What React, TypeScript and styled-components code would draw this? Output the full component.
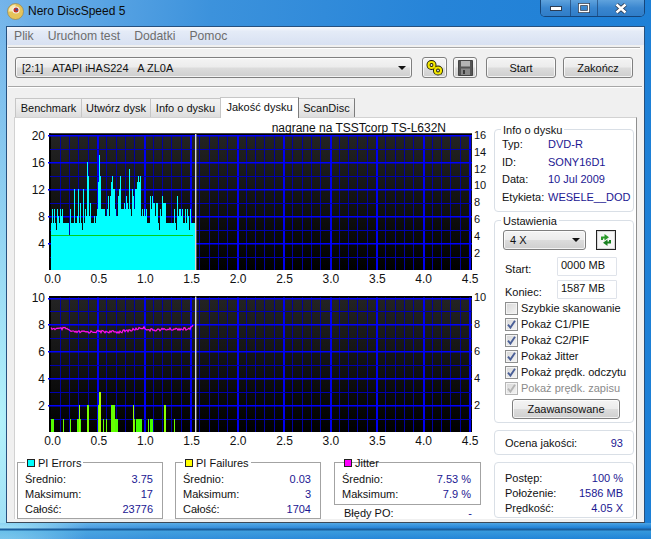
import React from "react";
import styled, { createGlobalStyle } from "styled-components";

const Global = createGlobalStyle`
  html, body { margin: 0; padding: 0; background: #fff; }
  * { box-sizing: border-box; }
  #root { width: 651px; height: 539px; overflow: hidden; }
`;

const FONT = `"Liberation Sans", Arial, sans-serif`;

const Desktop = styled.div`
  width: 651px;
  height: 539px;
  display: flex;
  flex-direction: column;
  padding: 0 6px;
  font: 11px ${FONT};
  color: #111;
  background:
    radial-gradient(ellipse 90px 420px at 0% 78%, #b4f2fb 0%, rgba(180, 242, 251, 0) 100%),
    linear-gradient(96deg, #74b4ea 0%, #3c92dc 30%, #2684d8 62%, #1c7fd6 100%);
`;

const TitleBar = styled.div`
  height: 26px;
  display: flex;
  align-items: flex-start;
  justify-content: space-between;
`;

const TitleLeft = styled.div`
  display: flex;
  align-items: center;
  gap: 4px;
  height: 22px;
  margin-left: 1px;
  font-size: 12px;
  color: #0b0b0b;
`;

const Controls = styled.div`
  display: flex;
  height: 17px;
  border: 1px solid rgba(18, 50, 92, 0.75);
  border-top: none;
  border-radius: 0 0 5px 5px;
  overflow: hidden;
  box-shadow: inset 0 0 0 1px rgba(255, 255, 255, 0.25);
`;

const ControlButton = styled.div<{ $w: number }>`
  width: ${(p) => p.$w}px;
  display: flex;
  align-items: center;
  justify-content: center;
  border-left: 1px solid rgba(18, 50, 92, 0.55);
  background: linear-gradient(#5fa2dd, #3a86cf 50%, #2f7dc8);
  &:first-child { border-left: none; }
`;

const Client = styled.div`
  flex: none;
  height: 497px;
  display: flex;
  flex-direction: column;
  background: #f0f0f0;
  border: 1px solid #26507e;
  border-bottom-color: #3d4a58;
`;

const WindowFoot = styled.div`
  flex: 1;
  margin: 0 -6px;
  background: linear-gradient(
    rgba(120, 200, 240, 0.5) 0,
    rgba(120, 200, 240, 0) 5px,
    #1b5f9e 6px,
    #1b5f9e 7px,
    rgba(70, 170, 225, 0.6) 8px,
    rgba(40, 140, 215, 0.3) 100%
  );
`;

const MenuBar = styled.div`
  height: 18px;
  display: flex;
  align-items: center;
  gap: 14px;
  padding-left: 7px;
  font-size: 12.2px;
  color: #6d6d6d;
  background: linear-gradient(#f6f8fc 0, #e4ebf7 25%, #d8e1f2 100%);
`;

const Rule = styled.div<{ $top: number; $right: number }>`
  height: 2px;
  flex: none;
  margin: ${(p) => p.$top}px ${(p) => p.$right}px 0 1px;
  border-top: 1px solid #a7a7a7;
  border-bottom: 1px solid #fff;
`;

const Toolbar = styled.div`
  height: 37px;
  display: flex;
  align-items: center;
  padding-left: 8px;
`;

const aero = `
  border: 1px solid #7f7f7f;
  border-radius: 3px;
  background: linear-gradient(#f4f4f4 0, #ececec 48%, #dcdcdc 52%, #cfcfcf 100%);
  box-shadow: inset 0 0 0 1px rgba(255,255,255,.75);
`;

const Combo = styled.div<{ $w: number; $h: number }>`
  ${aero}
  width: ${(p) => p.$w}px;
  height: ${(p) => p.$h}px;
  display: flex;
  align-items: center;
  justify-content: space-between;
  padding: 0 5px 0 6px;
  white-space: pre;
`;

const Arrow = styled.span`
  width: 0;
  height: 0;
  border-left: 4px solid transparent;
  border-right: 4px solid transparent;
  border-top: 4px solid #111;
`;

const IconButton = styled.div<{ $w: number; $ml: number }>`
  ${aero}
  width: ${(p) => p.$w}px;
  height: 21px;
  margin-left: ${(p) => p.$ml}px;
  display: flex;
  align-items: center;
  justify-content: center;
`;

const PushButton = styled.div<{ $w: number; $ml: number; $h?: number }>`
  ${aero}
  width: ${(p) => p.$w}px;
  height: ${(p) => p.$h ?? 21}px;
  margin-left: ${(p) => p.$ml}px;
  display: flex;
  align-items: center;
  justify-content: center;
`;

const TabStrip = styled.div`
  display: flex;
  align-items: flex-end;
  height: 20px;
  margin: 9px 0 0 8px;
`;

const Tab = styled.div<{ $w: number; $active?: boolean }>`
  width: ${(p) => p.$w}px;
  height: ${(p) => (p.$active ? 21 : 19)}px;
  margin-bottom: ${(p) => (p.$active ? -1 : 0)}px;
  position: relative;
  z-index: ${(p) => (p.$active ? 2 : 0)};
  display: flex;
  align-items: ${(p) => (p.$active ? "flex-start" : "center")};
  padding-top: ${(p) => (p.$active ? 3 : 0)}px;
  justify-content: center;
  white-space: nowrap;
  border: 1px solid #c6c6c6;
  border-right-color: #7c7c7c;
  border-bottom: none;
  margin-right: -1px;
  background: ${(p) => (p.$active ? "#fff" : "linear-gradient(#f3f3f3, #ebebeb 50%, #dddddd)")};
`;

const TabPanel = styled.div`
  display: flex;
  width: 623px;
  height: 402px;
  margin-left: 7px;
  background: #fff;
  border: 1px solid #d2d2d2;
  border-right-color: #8f8f8f;
  border-bottom: none;
`;

const LeftColumn = styled.div`
  width: 476px;
  display: flex;
  flex-direction: column;
`;

const RightColumn = styled.div`
  width: 140px;
  margin-left: 3px;
  padding-top: 11px;
  display: flex;
  flex-direction: column;
`;

const ChartSvg = styled.svg`
  display: block;
  flex: none;
  font: 12px ${FONT};
`;

const StatsRow = styled.div`
  display: flex;
  gap: 12px;
  padding: 12px 0 0 2px;
`;

const StatColumn = styled.div<{ $w: number; $ml?: number }>`
  width: ${(p) => p.$w}px;
  margin-left: ${(p) => p.$ml ?? 0}px;
`;

const StatBox = styled.div<{ $h: number }>`
  height: ${(p) => p.$h}px;
  border: 1px solid #a3a3a3;
  padding: 0 9px 0 7px;
`;

const StatLegend = styled.div<{ $plain?: boolean }>`
  display: flex;
  align-items: center;
  gap: 2px;
  width: fit-content;
  height: 14px;
  margin: -7px 0 1px 0;
  padding: 0 2px 0 1px;
  background: ${(p) => (p.$plain ? "transparent" : "#fff")};
`;

const Swatch = styled.span<{ $c: string }>`
  width: 8px;
  height: 8px;
  background: ${(p) => p.$c};
  border: 1px solid #222;
  margin: 0 1px;
`;

const Row = styled.div<{ $h?: number }>`
  height: ${(p) => p.$h ?? 15}px;
  display: flex;
  align-items: center;
  justify-content: space-between;
  white-space: nowrap;
`;

const Value = styled.span`
  color: #1b1792;
`;

const ErrorRow = styled(Row)`
  margin: 1px 9px 0 10px;
`;

const Group = styled.div<{ $h: number; $mt: number }>`
  height: ${(p) => p.$h}px;
  margin-top: ${(p) => p.$mt}px;
  border: 1px solid #d9dfe6;
  border-radius: 4px;
  padding: 0 10px 0 7px;
`;

const GroupLegend = styled.div`
  width: fit-content;
  height: 14px;
  line-height: 14px;
  margin: -7px 0 -2px -1px;
  padding: 0 2px;
  background: #fff;
`;

const InfoRow = styled.div`
  display: grid;
  grid-template-columns: 46px 1fr;
  align-items: center;
  height: 17.7px;
  white-space: nowrap;
`;

const SpeedRow = styled.div`
  display: flex;
  align-items: center;
  margin: 4px 0 0 1px;
  gap: 10px;
  height: 20px;
`;

const RefreshButton = styled.div`
  width: 20px;
  height: 20px;
  border: 1px solid #222;
  box-shadow: inset 0 0 0 1px #d8d8d8;
  display: flex;
  align-items: center;
  justify-content: center;
  background: #f6f6f6;
`;

const FieldRow = styled.div<{ $mt: number }>`
  display: flex;
  align-items: center;
  justify-content: space-between;
  margin: ${(p) => p.$mt}px 6px 0 3px;
  height: 19px;
`;

const FieldLabel = styled.span`
  padding-top: 5px;
`;

const Field = styled.div`
  width: 60px;
  height: 19px;
  border: 1px solid #dfe3ea;
  border-radius: 1px;
  padding-left: 3px;
  line-height: 15px;
`;

const Checks = styled.div`
  margin: 1px 0 0 3px;
`;

const CheckRow = styled.div<{ $off?: boolean }>`
  height: 16px;
  display: flex;
  align-items: center;
  gap: 3px;
  white-space: nowrap;
  color: ${(p) => (p.$off ? "#8b8b8b" : "#111")};
`;

const CheckBox = styled.span<{ $off?: boolean }>`
  width: 13px;
  height: 13px;
  flex: none;
  border: 1px solid ${(p) => (p.$off ? "#b5b5b5" : "#8e8f8f")};
  background: linear-gradient(135deg, #d6d6d6, #f4f4f4);
  box-shadow: inset 0 0 0 1px #f4f4f4;
  display: flex;
  align-items: center;
  justify-content: center;
`;

const AdvancedWrap = styled.div`
  display: flex;
  margin-top: 3px;
`;

const SummaryRow = styled(Row)`
  margin: 4px 0 0 3px;
`;

const SummaryList = styled.div`
  padding: 7px 0 0 3px;
`;

/* ---------- chart data ---------- */

const PIE = [
  7, 9, 7, 9, 7, 6, 9, 8, 7, 9, 8, 9, 7, 7, 7, 7, 7, 7, 5, 9, 7, 7, 7, 12, 7, 7, 8, 12, 7, 10, 7, 6, 12, 7,
  9, 8, 16, 14, 8, 10, 7, 7, 7, 8, 7, 8, 9, 13, 17, 14, 9, 9, 9, 9, 8, 8, 9, 11, 8, 11, 13, 14, 12, 12, 9, 8,
  8, 11, 12, 14, 9, 9, 9, 10, 9, 11, 10, 9, 15, 9, 8, 12, 11, 9, 12, 12, 13, 14, 13, 14, 8, 9, 8, 9, 8, 9, 7,
  7, 7, 11, 9, 11, 10, 10, 8, 10, 10, 7, 6, 9, 8, 11, 10, 10, 10, 7, 7, 7, 7, 7, 7, 7, 7, 9, 7, 6, 11, 8, 9,
  9, 8, 9, 7, 7, 9, 7, 9, 8, 6, 9, 7, 7, 7, 7,
];

const PIF: [number, number, number, string][] = [
  [51, 3, 1, "#55ff00"], [63, 1, 1, "#66ff00"], [70, 1, 1, "#66ff00"], [77, 4, 1, "#55ff00"],
  [79, 1, 2, "#99ff00"], [87, 2, 2, "#77ff00"], [98, 2, 2, "#77ff00"], [99, 2, 3, "#a8ff00"],
  [103, 1, 1, "#66ff00"], [106, 1, 1, "#66ff00"], [111, 4, 2, "#66ff00"], [115, 3, 1, "#55ff00"],
  [133, 1, 2, "#99ff00"], [134, 1, 1, "#66ff00"], [136, 6, 1, "#44ff00"], [148, 1, 1, "#66ff00"],
  [150, 3, 1, "#44ff00"], [164, 2, 2, "#88ff00"], [174, 1, 1, "#66ff00"],
];

const JITTER_KEYS: [number, number][] = [
  [51, 328.5], [60, 329], [66, 328.5], [72, 332], [85, 332], [100, 331.5], [118, 332], [132, 330],
  [143, 327.5], [150, 330], [175, 329], [190, 329], [193, 325],
];

const jitterPoints = (() => {
  const pts: string[] = [];
  for (let x = 51; x <= 193; x += 1) {
    let i = 0;
    while (i < JITTER_KEYS.length - 2 && JITTER_KEYS[i + 1][0] < x) i += 1;
    const [x0, y0] = JITTER_KEYS[i];
    const [x1, y1] = JITTER_KEYS[i + 1];
    const base = y0 + ((y1 - y0) * (x - x0)) / (x1 - x0);
    const r = Math.sin(x * 12.9898) * 43758.5453;
    const noise = x === 193 ? 0 : (r - Math.floor(r) - 0.5) * 2.6;
    pts.push(`${x},${(base + noise).toFixed(1)}`);
  }
  return pts.join(" ");
})();

/* ---------- chart ---------- */

const XS = ["0.0", "0.5", "1.0", "1.5", "2.0", "2.5", "3.0", "3.5", "4.0", "4.5"];

type ChartProps = {
  id: string;
  vbY: number;
  vbH: number;
  top: number;
  bottom: number;
  left: [string, number][];
  right: [string, number][];
  caption?: string;
  children: React.ReactNode;
};

function Chart({ id, vbY, vbH, top, bottom, left, right, caption, children }: ChartProps) {
  const step = (bottom - top) / 10;
  return (
    <ChartSvg width={476} height={vbH} viewBox={`15 ${vbY} 476 ${vbH}`}>
      <defs>
        <linearGradient id={id} x1="0" y1="0" x2="0" y2="1">
          <stop offset="0" stopColor="#242424" />
          <stop offset="1" stopColor="#000" />
        </linearGradient>
      </defs>
      {caption && (
        <text x={446} y={132} textAnchor="end" fill="#111">
          {caption}
        </text>
      )}
      <rect x={49} y={top - 1.5} width={423} height={bottom - top + 1.5} fill={`url(#${id})`} />
      <rect x={49} y={top - 1.5} width={423} height={2} fill="#000" />
      <rect x={49} y={top - 1.5} width={2} height={bottom - top + 1.5} fill="#000" />
      {Array.from({ length: 46 }, (_, i) => {
        const x = Math.round(50.5 + i * 9.3);
        const major = i % 5 === 0;
        return i === 0 ? null : (
          <rect key={`v${i}`} x={x} y={top} width={major ? 2 : 1} height={bottom - top} fill={major ? "#0000f0" : "#0000a0"} />
        );
      })}
      {Array.from({ length: 10 }, (_, i) => {
        const y = Math.round(top + i * step);
        const major = i % 2 === 0;
        return (
          <rect key={`h${i}`} x={major ? 48 : 50} y={y} width={major ? 424 : 422} height={major ? 1.5 : 1} fill={major ? "#0000ff" : "#0000b0"} />
        );
      })}
      {children}
      <rect x={195} y={top - 1} width={1.4} height={bottom - top + 1} fill="#d8d8d8" />
      {left.map(([t, y]) => (
        <text key={t} x={45} y={y + 4.5} textAnchor="end" fill="#111">
          {t}
        </text>
      ))}
      {right.map(([t, y]) => (
        <text key={t} x={474} y={y + 4} fontSize={11} fill="#111">
          {t}
        </text>
      ))}
      {XS.map((t, i) => (
        <text key={t} x={52.5 + i * 46.4} y={bottom + 12.5} textAnchor="middle" fill="#111">
          {t}
        </text>
      ))}
    </ChartSvg>
  );
}

/* ---------- icons ---------- */

const AppIcon = () => (
  <svg width="17" height="17" viewBox="0 0 17 17">
    <circle cx="8.5" cy="8.5" r="8" fill="#e5c35a" stroke="#8a7a50" strokeWidth="0.6" />
    <path d="M1.5 8.5A7 7 0 0 1 8.5 1.5L8.5 6A2.5 2.5 0 0 0 6 8.5Z" fill="#f5e9b0" />
    <circle cx="9" cy="7" r="3.6" fill="#f4f4f4" />
    <circle cx="9" cy="7" r="2.5" fill="#c8321e" />
    <circle cx="9.6" cy="6.6" r="1.2" fill="#2a4fb0" />
  </svg>
);

const DrivesIcon = () => (
  <svg width="18" height="16" viewBox="0 0 18 16">
    <g fill="none">
      <circle cx="5.5" cy="5" r="3" stroke="#1c1c00" strokeWidth="4" />
      <circle cx="12" cy="10.5" r="3" stroke="#1c1c00" strokeWidth="4" />
      <circle cx="5.5" cy="5" r="3" stroke="#f2e600" strokeWidth="2.2" />
      <circle cx="12" cy="10.5" r="3" stroke="#f2e600" strokeWidth="2.2" />
    </g>
    <path d="M9 14.5L16 14.5" stroke="#8a8a60" strokeWidth="1" opacity="0.6" />
  </svg>
);

const SaveIcon = () => (
  <svg width="15" height="16" viewBox="0 0 15 16">
    <path d="M0.5 0.5H14.5V15.5H0.5Z" fill="#555" stroke="#444" />
    <rect x="3" y="1" width="9" height="5.5" fill="#b4b4b4" />
    <rect x="3" y="8.5" width="9" height="6.5" fill="#8a8a8a" />
    <rect x="5" y="10" width="2" height="4" fill="#3c3c3c" />
  </svg>
);

const RefreshIcon = () => (
  <svg width="16" height="18" viewBox="0 0 16 18">
    <path d="M3 9V5.5H6.5V3L11 6.2 6.5 9.4V7.6H5V9Z" fill="#2a9a2a" />
    <path d="M13 9V12.5H9.5V15L5 11.8 9.5 8.6V10.4H11V9Z" fill="#18801f" />
  </svg>
);

const Tick = ({ off }: { off?: boolean }) => (
  <svg width="11" height="11" viewBox="0 0 11 11">
    <path d="M2 5.6L4.4 8.6 9 1.8" fill="none" stroke={off ? "#b4b4b4" : "#4a5f97"} strokeWidth="1.9" />
  </svg>
);

const MinGlyph = () => (
  <svg width="12" height="6" viewBox="0 0 12 6">
    <rect x="0.5" y="1.5" width="11" height="4" fill="#fff" stroke="#2d3c52" />
  </svg>
);

const MaxGlyph = () => (
  <svg width="12" height="10" viewBox="0 0 12 10">
    <rect x="1.5" y="1.5" width="9" height="7" fill="none" stroke="#2d3c52" strokeWidth="3" />
    <rect x="1.5" y="1.5" width="9" height="7" fill="none" stroke="#fff" strokeWidth="1.4" />
  </svg>
);

const CloseGlyph = () => (
  <svg width="14" height="11" viewBox="0 0 14 11">
    <path d="M2.5 1.5L11.5 9.5M11.5 1.5L2.5 9.5" stroke="#2d3c52" strokeWidth="4.2" />
    <path d="M2.5 1.5L11.5 9.5M11.5 1.5L2.5 9.5" stroke="#fff" strokeWidth="2.4" />
  </svg>
);

/* ---------- page ---------- */

const stat = (label: string, value: string) => (
  <Row key={label}>
    <span>{label}</span>
    <Value>{value}</Value>
  </Row>
);

const info = (label: string, value: string) => (
  <InfoRow key={label}>
    <span>{label}</span>
    <Value>{value}</Value>
  </InfoRow>
);

const check = (label: string, checked = true, off = false) => (
  <CheckRow key={label} $off={off}>
    <CheckBox $off={off}>{checked && <Tick off={off} />}</CheckBox>
    {label}
  </CheckRow>
);

export default function App() {
  return (
    <>
      <Global />
      <Desktop>
        <TitleBar>
          <TitleLeft>
            <AppIcon />
            Nero DiscSpeed 5
          </TitleLeft>
          <Controls>
            <ControlButton $w={29}>
              <MinGlyph />
            </ControlButton>
            <ControlButton $w={27}>
              <MaxGlyph />
            </ControlButton>
            <ControlButton $w={47}>
              <CloseGlyph />
            </ControlButton>
          </Controls>
        </TitleBar>
        <Client>
          <MenuBar>
            <span>Plik</span>
            <span>Uruchom test</span>
            <span>Dodatki</span>
            <span>Pomoc</span>
          </MenuBar>
          <Rule $top={2} $right={4} />
          <Toolbar>
            <Combo $w={397} $h={21}>
              {"[2:1]   ATAPI iHAS224   A ZL0A"}
              <Arrow />
            </Combo>
            <IconButton $w={25} $ml={10}>
              <DrivesIcon />
            </IconButton>
            <IconButton $w={24} $ml={6}>
              <SaveIcon />
            </IconButton>
            <PushButton $w={70} $ml={9}>
              Start
            </PushButton>
            <PushButton $w={70} $ml={7}>
              Zakończ
            </PushButton>
          </Toolbar>
          <Rule $top={0} $right={2} />
          <TabStrip>
            <Tab $w={67}>Benchmark</Tab>
            <Tab $w={70}>Utwórz dysk</Tab>
            <Tab $w={71}>Info o dysku</Tab>
            <Tab $w={79} $active>
              Jakość dysku
            </Tab>
            <Tab $w={57}>ScanDisc</Tab>
          </TabStrip>
          <TabPanel>
            <LeftColumn>
              <Chart
                id="g1"
                vbY={118}
                vbH={169}
                top={135}
                bottom={270}
                caption="nagrane na TSSTcorp TS-L632N"
                left={[["20", 135], ["16", 162], ["12", 189], ["8", 216], ["4", 243]]}
                right={[["16", 135], ["14", 152], ["12", 169], ["10", 185], ["8", 202], ["6", 219], ["4", 236], ["2", 253]]}
              >
                {PIE.map((v, i) => (
                  <rect key={i} x={51 + i} y={270 - v * 6.75} width={1} height={v * 6.75} fill="#00ffff" shapeRendering="crispEdges" />
                ))}
                <rect x={51} y={235} width={142} height={1} fill="#00cf20" />
              </Chart>
              <Chart
                id="g2"
                vbY={287}
                vbH={163}
                top={297.5}
                bottom={432}
                left={[["10", 297], ["8", 324], ["6", 351], ["4", 378], ["2", 405]]}
                right={[["10", 297], ["8", 324], ["6", 351], ["4", 378], ["2", 405]]}
              >
                <polyline points={jitterPoints} fill="none" stroke="#ff10f0" strokeWidth="1.2" />
                {PIF.map(([x, w, v, c]) => (
                  <rect key={`${x}-${v}`} x={x} y={432 - v * 13.45} width={w} height={v * 13.45} fill={c} shapeRendering="crispEdges" />
                ))}
              </Chart>
              <StatsRow>
                <StatColumn $w={146}>
                  <StatBox $h={57}>
                    <StatLegend>
                      <Swatch $c="#00ffff" />
                      PI Errors
                    </StatLegend>
                    {stat("Średnio:", "3.75")}
                    {stat("Maksimum:", "17")}
                    {stat("Całość:", "23776")}
                  </StatBox>
                </StatColumn>
                <StatColumn $w={146}>
                  <StatBox $h={57}>
                    <StatLegend>
                      <Swatch $c="#ffff00" />
                      PI Failures
                    </StatLegend>
                    {stat("Średnio:", "0.03")}
                    {stat("Maksimum:", "3")}
                    {stat("Całość:", "1704")}
                  </StatBox>
                </StatColumn>
                <StatColumn $w={147} $ml={1}>
                  <StatBox $h={43}>
                    <StatLegend $plain>
                      <Swatch $c="#ff00ff" />
                      Jitter
                    </StatLegend>
                    {stat("Średnio:", "7.53 %")}
                    {stat("Maksimum:", "7.9 %")}
                  </StatBox>
                  <ErrorRow $h={14}>
                    <span>Błędy PO:</span>
                    <Value>-</Value>
                  </ErrorRow>
                </StatColumn>
              </StatsRow>
            </LeftColumn>
            <RightColumn>
              <Group $h={83} $mt={0}>
                <GroupLegend>Info o dysku</GroupLegend>
                {info("Typ:", "DVD-R")}
                {info("ID:", "SONY16D1")}
                {info("Data:", "10 Jul 2009")}
                {info("Etykieta:", "WESELE__DOD")}
              </Group>
              <Group $h={203} $mt={8}>
                <GroupLegend>Ustawienia</GroupLegend>
                <SpeedRow>
                  <Combo $w={83} $h={20}>
                    4 X
                    <Arrow />
                  </Combo>
                  <RefreshButton>
                    <RefreshIcon />
                  </RefreshButton>
                </SpeedRow>
                <FieldRow $mt={7}>
                  <FieldLabel>Start:</FieldLabel>
                  <Field>0000 MB</Field>
                </FieldRow>
                <FieldRow $mt={4}>
                  <FieldLabel>Koniec:</FieldLabel>
                  <Field>1587 MB</Field>
                </FieldRow>
                <Checks>
                  {check("Szybkie skanowanie", false)}
                  {check("Pokaż C1/PIE")}
                  {check("Pokaż C2/PIF")}
                  {check("Pokaż Jitter")}
                  {check("Pokaż prędk. odczytu")}
                  {check("Pokaż prędk. zapisu", true, true)}
                </Checks>
                <AdvancedWrap>
                  <PushButton $w={108} $ml={10} $h={20}>
                    Zaawansowane
                  </PushButton>
                </AdvancedWrap>
              </Group>
              <Group $h={25} $mt={7}>
                <SummaryRow>
                  <span>Ocena jakości:</span>
                  <Value>93</Value>
                </SummaryRow>
              </Group>
              <Group $h={56} $mt={7}>
                <SummaryList>
                  {stat("Postęp:", "100 %")}
                  {stat("Położenie:", "1586 MB")}
                  {stat("Prędkość:", "4.05 X")}
                </SummaryList>
              </Group>
            </RightColumn>
          </TabPanel>
        </Client>
        <WindowFoot />
      </Desktop>
    </>
  );
}
